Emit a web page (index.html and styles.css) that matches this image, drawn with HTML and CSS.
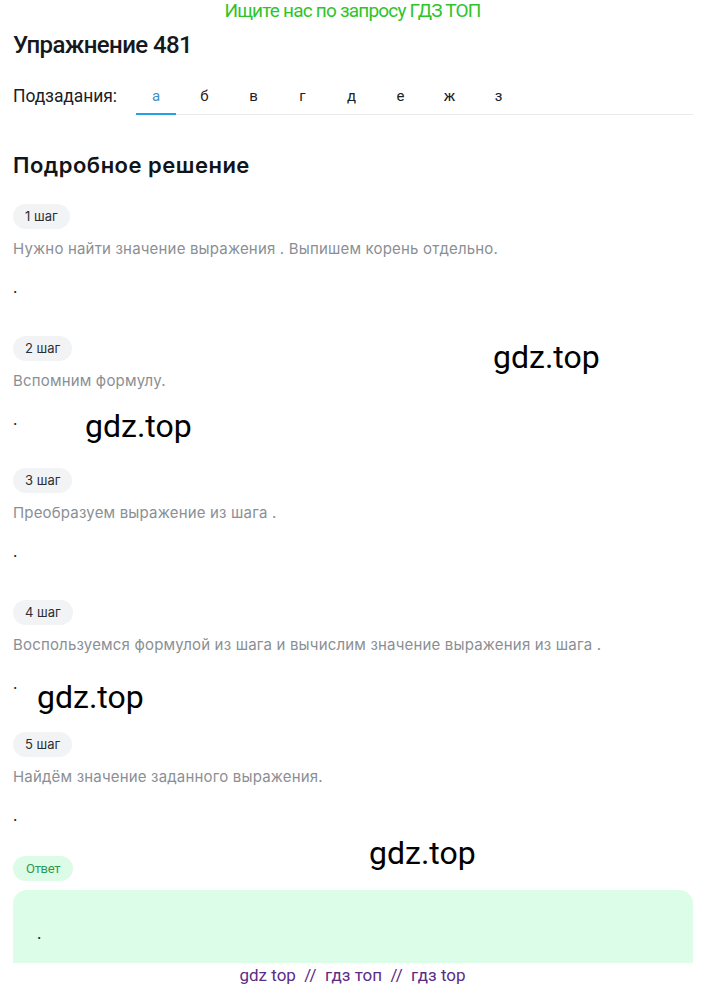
FILE: index.html
```html
<!DOCTYPE html>
<html lang="ru">
<head>
<meta charset="utf-8">
<link rel="stylesheet" href="styles.css">
</head>
<body>
<div class="promo">Ищите нас по запросу ГДЗ ТОП</div>
<main class="page">
  <h1 class="title">Упражнение 481</h1>
  <nav class="subtasks">
    <span class="subtasks-label">Подзадания:</span>
    <div class="tabs">
      <span class="tab active">а</span>
      <span class="tab">б</span>
      <span class="tab">в</span>
      <span class="tab">г</span>
      <span class="tab">д</span>
      <span class="tab">е</span>
      <span class="tab">ж</span>
      <span class="tab">з</span>
    </div>
  </nav>
  <h2 class="section-title">Подробное решение</h2>

  <section class="step">
    <span class="pill">1 шаг</span>
    <p class="step-text">Нужно найти значение выражения . Выпишем корень отдельно.</p>
    <p class="formula">.</p>
  </section>
  <section class="step">
    <span class="pill">2 шаг</span>
    <p class="step-text">Вспомним формулу.</p>
    <p class="formula">.</p>
  </section>
  <section class="step">
    <span class="pill">3 шаг</span>
    <p class="step-text">Преобразуем выражение из шага .</p>
    <p class="formula">.</p>
  </section>
  <section class="step">
    <span class="pill">4 шаг</span>
    <p class="step-text">Воспользуемся формулой из шага и вычислим значение выражения из шага .</p>
    <p class="formula">.</p>
  </section>
  <section class="step">
    <span class="pill">5 шаг</span>
    <p class="step-text">Найдём значение заданного выражения.</p>
    <p class="formula">.</p>
  </section>

  <section class="answer">
    <span class="pill pill-answer">Ответ</span>
    <div class="answer-box">.</div>
  </section>
</main>
<footer class="footer">gdz top&nbsp; //&nbsp; гдз топ&nbsp; //&nbsp; гдз top</footer>

<span class="wm wm1">gdz.top</span>
<span class="wm wm2">gdz.top</span>
<span class="wm wm3">gdz.top</span>
<span class="wm wm4">gdz.top</span>
</body>
</html>
```

FILE: styles.css
```css
html, body {
  margin: 0;
  padding: 0;
  background: #fff;
}
body {
  position: relative;
  width: 705px;
  height: 990px;
  overflow: hidden;
  font-family: "Inter", "Noto Sans", sans-serif;
  color: #1a1d21;
}
.promo {
  height: 22px;
  line-height: 22px;
  text-align: center;
  font-family: "Roboto", sans-serif;
  font-size: 19px;
  letter-spacing: -0.8px;
  color: #2ec42a;
}
.page {
  padding: 0 12px 0 13px;
}
.title {
  margin: 0;
  padding-top: 10px;
  height: 28px;
  line-height: 26px;
  font-family: "Roboto", sans-serif;
  font-size: 24px;
  font-weight: 500;
  letter-spacing: -0.6px;
  color: #15191e;
}
.subtasks {
  display: flex;
  align-items: stretch;
  margin-top: 20px;
  height: 35px;
}
.subtasks-label {
  width: 123px;
  line-height: 32px;
  font-family: "Roboto", sans-serif;
  font-size: 17.5px;
  letter-spacing: -0.1px;
  color: #1d2024;
}
.tabs {
  flex: 1;
  display: flex;
  border-bottom: 1px solid #e8eaed;
}
.tab {
  width: 49px;
  text-align: center;
  line-height: 32px;
  font-family: "Roboto", sans-serif;
  font-size: 15px;
  color: #1d2024;
  margin-bottom: -1px;
  border-bottom: 2px solid transparent;
}
.tab:first-child {
  width: 40px;
  margin-right: 4px;
}
.tab.active {
  color: #3a8fc4;
  border-bottom-color: #1fa3e3;
}
.section-title {
  margin: 36px 0 0;
  height: 28px;
  line-height: 28px;
  font-size: 22px;
  font-weight: 600;
  letter-spacing: 0.5px;
  color: #111418;
}
.step {
  margin-top: 25px;
  display: flex;
  flex-direction: column;
  align-items: flex-start;
}
.step + .step {
  margin-top: 38px;
}
.pill {
  display: inline-block;
  height: 25px;
  line-height: 25px;
  padding: 0 12px;
  border-radius: 13px;
  background: #f2f3f5;
  font-size: 13px;
  color: #2b2f33;
}
.step-text {
  margin: 10px 0 0;
  line-height: 20px;
  font-size: 15px;
  letter-spacing: 0.18px;
  color: #8b8f94;
}
.formula {
  margin: 19px 0 0;
  line-height: 20px;
  font-size: 15px;
  color: #1a1d21;
}
.answer {
  margin-top: 30px;
  display: flex;
  flex-direction: column;
  align-items: flex-start;
}
.pill-answer {
  padding: 0 13px;
  background: #dcfce7;
  color: #2f9a52;
  font-family: "Roboto", sans-serif;
  letter-spacing: -0.3px;
}
.answer-box {
  align-self: stretch;
  margin-top: 9px;
  height: 73px;
  box-sizing: border-box;
  padding: 34px 24px 0;
  border-radius: 14px 14px 0 0;
  background: #dcfde7;
  line-height: 20px;
  font-size: 15px;
  color: #1a1d21;
}
.footer {
  height: 27px;
  line-height: 24px;
  text-align: center;
  background: #fff;
  font-family: "Roboto", sans-serif;
  font-size: 17px;
  letter-spacing: 0;
  color: #5b2c86;
}
.wm {
  position: absolute;
  font-family: "Roboto", sans-serif;
  font-size: 32px;
  line-height: 34px;
  color: #000;
}
.wm1 { left: 493px; top: 340px; }
.wm2 { left: 85px; top: 409px; }
.wm3 { left: 37px; top: 680px; }
.wm4 { left: 369px; top: 836px; }
```
